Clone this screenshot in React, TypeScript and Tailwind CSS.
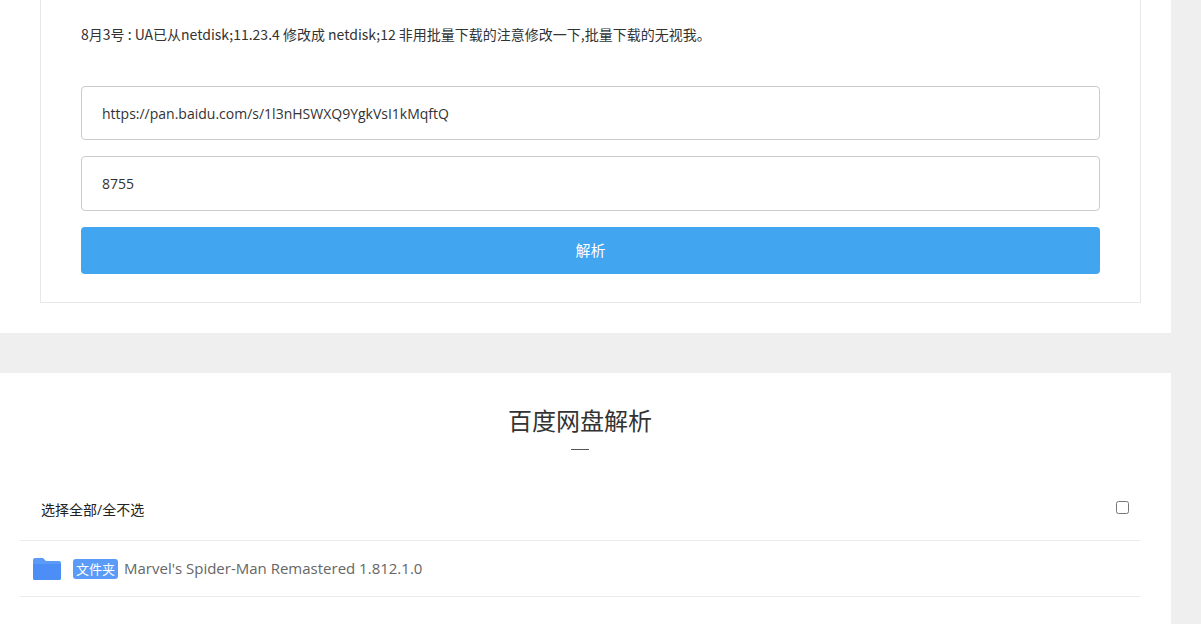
export default function App() {
  const font = { fontFamily: '"Open Sans","Noto Sans CJK SC",sans-serif' };
  const cjk = { fontFamily: '"Noto Sans CJK SC","Open Sans",sans-serif' };
  return (
    <div className="min-h-screen bg-[#efefef] text-[#333]" style={font}>
      <div className="w-[1171px]">
        <div className="bg-white pb-[30px] pl-10 pr-[30px]">
          <div className="border border-t-0 border-[#e8e8e8] px-10 pb-7">
            <p className="pt-[22px] text-[14px] leading-[24px] text-[#333]" style={cjk}>
              8月3号 : UA已从netdisk;11.23.4 修改成 netdisk;12 非用批量下载的注意修改一下,批量下载的无视我。
            </p>
            <div className="mt-10 flex h-[54px] items-center rounded border border-[#ccc] px-5 text-[14px]">
              https://pan.baidu.com/s/1l3nHSWXQ9YgkVsI1kMqftQ
            </div>
            <div className="mt-4 flex h-[55px] items-center rounded border border-[#ccc] px-5 text-[14px]">8755</div>
            <button className="mt-4 h-[47px] w-full rounded bg-[#42a5ef] text-[15px] text-white">解析</button>
          </div>
        </div>
        <div className="mt-10 h-[260px] bg-white pl-5 pr-[31px]">
          <h2 className="pt-[31px] text-center text-[24px] leading-[34px] text-[#333]">百度网盘解析</h2>
          <div className="mx-auto mt-[11px] h-px w-[18px] bg-[#555]" />
          <div className="mt-[41px] flex h-[50px] items-center justify-between border-b border-[#ebebeb] pl-[21px] pr-[11px] text-[14px] text-[#222]">
            <span className="-mt-3">选择全部/全不选</span>
            <input type="checkbox" className="-mt-4 h-[13px] w-[13px]" />
          </div>
          <div className="flex h-[56px] items-center border-b border-[#ebebeb] pl-[13px]">
            <svg width="28" height="22" viewBox="0 0 28 22">
              <path d="M2 0h8l3 3h13a2 2 0 0 1 2 2v15a2 2 0 0 1-2 2H2a2 2 0 0 1-2-2V2a2 2 0 0 1 2-2z" fill="#5b9bf8" />
              <path d="M0 6h28v14a2 2 0 0 1-2 2H2a2 2 0 0 1-2-2z" fill="#4c8ef5" />
            </svg>
            <span className="ml-[12px] rounded-[3px] bg-[#5b9bf8] px-[3px] text-[13px] leading-[20px] text-white">文件夹</span>
            <span className="ml-[6px] text-[15px] text-[#666]">Marvel's Spider-Man Remastered 1.812.1.0</span>
          </div>
        </div>
      </div>
    </div>
  );
}
